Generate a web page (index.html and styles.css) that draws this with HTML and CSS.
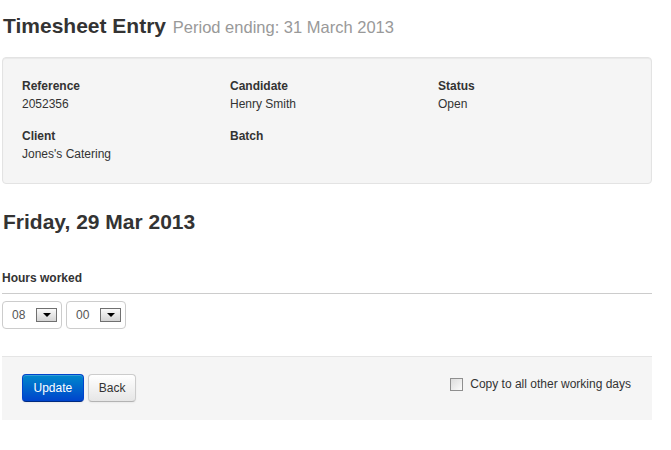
FILE: index.html
```html
<!DOCTYPE html>
<html>
<head>
<meta charset="utf-8">
<link rel="stylesheet" href="styles.css">
</head>
<body>
<div class="page">
  <h1 class="title">Timesheet Entry <small>Period ending: 31 March 2013</small></h1>

  <div class="well">
    <div class="info-grid">
      <div class="item"><div class="lbl">Reference</div><div class="val">2052356</div></div>
      <div class="item"><div class="lbl">Candidate</div><div class="val">Henry Smith</div></div>
      <div class="item"><div class="lbl">Status</div><div class="val">Open</div></div>
      <div class="item"><div class="lbl">Client</div><div class="val">Jones's Catering</div></div>
      <div class="item"><div class="lbl">Batch</div><div class="val"></div></div>
    </div>
  </div>

  <h2 class="day">Friday, 29 Mar 2013</h2>

  <div class="field-label">Hours worked</div>
  <div class="selects">
    <div class="sel"><span class="sel-text">08</span><span class="sel-btn"><span class="tri"></span></span></div>
    <div class="sel"><span class="sel-text">00</span><span class="sel-btn"><span class="tri"></span></span></div>
  </div>

  <div class="form-actions">
    <div class="btns">
      <button class="btn btn-primary">Update</button>
      <button class="btn">Back</button>
    </div>
    <label class="copy"><span class="chk"></span>Copy to all other working days</label>
  </div>
</div>
</body>
</html>
```
FILE: styles.css
```css
html, body {
  margin: 0;
  padding: 0;
  background: #fff;
}
body {
  font-family: "Liberation Sans", Arial, sans-serif;
  font-size: 12px;
  line-height: 18px;
  color: #333;
}
.page {
  width: 650px;
  margin-left: 2px;
}
.title {
  margin: 0;
  padding-top: 12px;
  font-size: 21px;
  line-height: 28px;
  font-weight: bold;
  color: #333;
  margin-left: 1px;
}
.title small {
  font-size: 16.5px;
  font-weight: normal;
  color: #999;
  margin-left: 1px;
}
.well {
  margin-top: 16px;
  background: #f5f5f5;
  border: 1px solid #e3e3e3;
  border-radius: 4px;
  box-shadow: inset 0 1px 1px rgba(0,0,0,0.05);
  padding: 19px 19px 20px;
}
.info-grid {
  display: grid;
  grid-template-columns: 208px 208px 208px;
  row-gap: 14px;
}
.lbl {
  font-weight: bold;
  height: 18px;
}
.val {
  height: 18px;
}
.day {
  margin: 24px 0 0 1px;
  font-size: 21px;
  line-height: 28px;
  font-weight: bold;
}
.field-label {
  margin-top: 33px;
  font-weight: bold;
  padding-bottom: 6px;
  border-bottom: 1px solid #ccc;
}
.selects {
  display: flex;
  gap: 4px;
  margin-top: 7px;
}
.sel {
  box-sizing: border-box;
  width: 60px;
  height: 28px;
  border: 1px solid #ccc;
  border-radius: 4px;
  background: #fff;
  display: flex;
  align-items: center;
}
.sel-text {
  color: #555;
  margin-left: 9px;
  width: 24px;
}
.sel-btn {
  box-sizing: border-box;
  width: 21px;
  height: 14px;
  border: 1px solid #707070;
  background: linear-gradient(#fafafa, #d4d4d4);
  display: flex;
  align-items: center;
  justify-content: center;
}
.tri {
  width: 0;
  height: 0;
  border-left: 4px solid transparent;
  border-right: 4px solid transparent;
  border-top: 4px solid #000;
}
.form-actions {
  margin-top: 27px;
  background: #f5f5f5;
  border-top: 1px solid #e5e5e5;
  padding: 17px 21px 18px 20px;
  display: flex;
  justify-content: space-between;
  align-items: flex-start;
}
.btns {
  display: flex;
  gap: 4px;
}
.btn {
  font-family: "Liberation Sans", Arial, sans-serif;
  font-size: 12px;
  height: 28px;
  padding: 0 10px;
  border-radius: 4px;
  border: 1px solid #ccc;
  border-bottom-color: #b3b3b3;
  background: linear-gradient(#ffffff, #e6e6e6);
  color: #333;
  box-shadow: inset 0 1px 0 rgba(255,255,255,0.2), 0 1px 2px rgba(0,0,0,0.05);
  cursor: pointer;
}
.btn-primary {
  color: #fff;
  background: linear-gradient(#0088cc, #0044cc);
  border-color: #0044cc #0044cc #002a80;
  padding: 0 10.5px;
}
.copy {
  display: flex;
  align-items: center;
  gap: 7px;
  margin-top: 1px;
  color: #333;
}
.chk {
  box-sizing: border-box;
  width: 13px;
  height: 13px;
  border: 1px solid #8f8f8f;
  background: linear-gradient(135deg, #dcdcdc, #fbfbfb);
}
```
